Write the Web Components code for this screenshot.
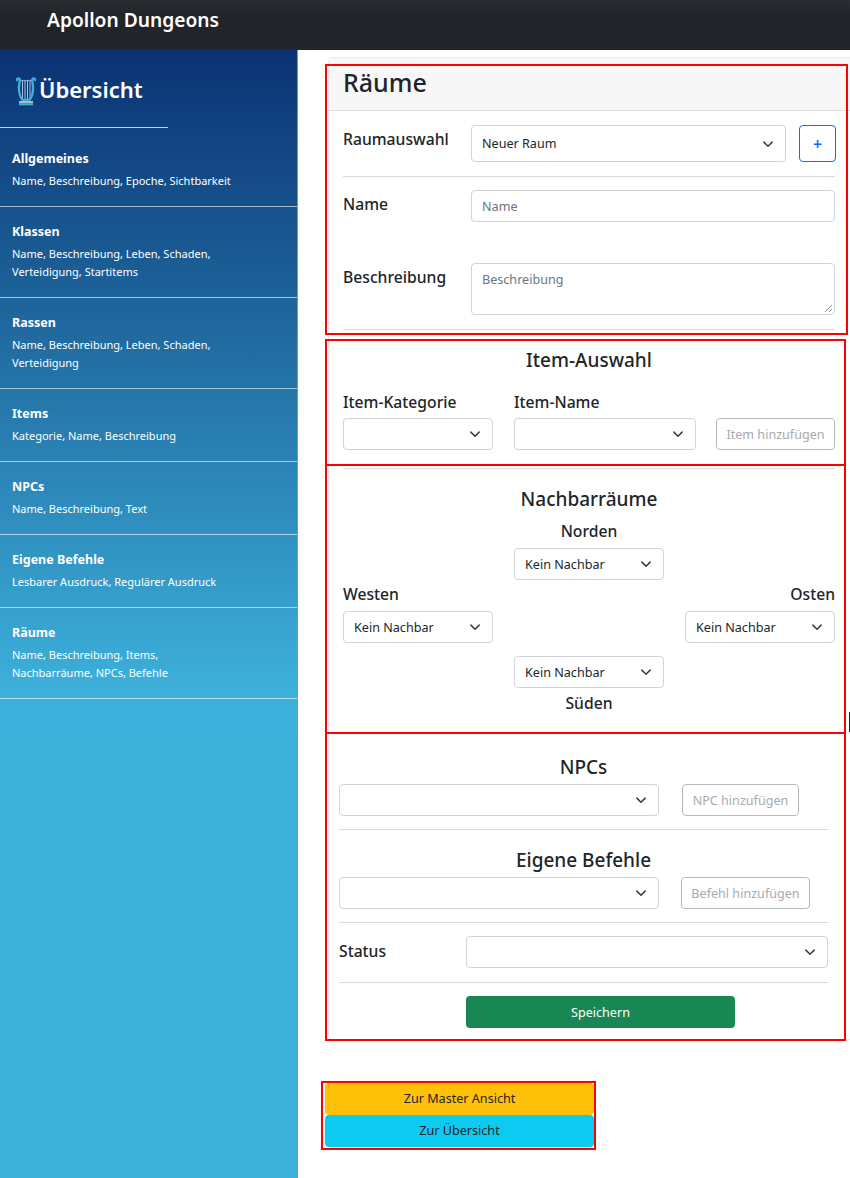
<!DOCTYPE html>
<html lang="de">
<head>
<meta charset="utf-8">
<title>Apollon Dungeons</title>
<style>
    html, body { margin: 0; height: 1178px; overflow: hidden; background: #fff; }
    body { font-family: "Noto Sans", "Open Sans", sans-serif; color: #212529; position: relative; }
    .layout { display: flex; height: 1128px; }
</style>
</head>
<body>
<ad-navbar>Apollon Dungeons</ad-navbar>
<div class="layout">
    <ad-sidebar>
        <ad-nav-item heading="Allgemeines">Name, Beschreibung, Epoche, Sichtbarkeit</ad-nav-item>
        <ad-nav-item heading="Klassen">Name, Beschreibung, Leben, Schaden,<br>Verteidigung, Startitems</ad-nav-item>
        <ad-nav-item heading="Rassen">Name, Beschreibung, Leben, Schaden,<br>Verteidigung</ad-nav-item>
        <ad-nav-item heading="Items">Kategorie, Name, Beschreibung</ad-nav-item>
        <ad-nav-item heading="NPCs">Name, Beschreibung, Text</ad-nav-item>
        <ad-nav-item heading="Eigene Befehle">Lesbarer Ausdruck, Regulärer Ausdruck</ad-nav-item>
        <ad-nav-item heading="Räume">Name, Beschreibung, Items,<br>Nachbarräume, NPCs, Befehle</ad-nav-item>
    </ad-sidebar>
    <ad-room-page></ad-room-page>
</div>

<!-- red annotation boxes drawn over the page -->
<ad-mark x="325" y="64" w="523" h="271"></ad-mark>
<ad-mark x="325" y="339" w="521" h="127"></ad-mark>
<ad-mark x="325" y="464" w="521" h="270"></ad-mark>
<ad-mark x="325" y="732" w="521" h="309"></ad-mark>
<ad-mark x="321" y="1081" w="275" h="69"></ad-mark>
<ad-mark tone="dark" x="849" y="712" w="1" h="20"></ad-mark>

<script>
    class AdNavbar extends HTMLElement {
        constructor() {
            super();
            this.attachShadow({ mode: "open" });
            this.shadowRoot.innerHTML = `
                <style>
                    :host {
                        display: flex;
                        height: 50px;
                        box-sizing: border-box;
                        padding: 6px 0 0 47px;
                        background: linear-gradient(#2a2e33, #212529 30%);
                        color: #fff;
                        font-size: 19.200px;
                        font-weight: 600;
                        line-height: 28px;
                    }
                </style>
                <slot></slot>
            `;
        }
    }

    class AdSidebar extends HTMLElement {
        constructor() {
            super();
            this.attachShadow({ mode: "open" });
            this.shadowRoot.innerHTML = `
                <style>
                    :host {
                        display: block;
                        flex: 0 0 298px;
                        background: #3db0da;
                        color: #fff;
                    }
                    .panel {
                        width: 297px;
                        height: 687px;
                        background: linear-gradient(#0a3272, #3db1db 94%);
                    }
                    .head {
                        display: flex;
                        align-items: center;
                        gap: 2px;
                        height: 77px;
                        box-sizing: border-box;
                        padding: 4px 0 0 15px;
                        font-size: 22px;
                        font-weight: 600;
                    }
                    .head span { margin-bottom: 4px; }
                    svg { width: 22px; height: 30px; flex: none; }
                    .rule {
                        width: 168px;
                        height: 1px;
                        margin-bottom: 6px;
                        background: rgba(255, 255, 255, .75);
                    }
                </style>
                <div class="panel">
                    <div class="head">
                        <svg viewBox="0 0 22 30" fill="none">
                            <path d="M4 4.500H18" stroke="#7fa6cf" stroke-width="1.200"/>
                            <path d="M7.500 5V23M10 5V23M12.500 5V23M15 5V23" stroke="#a9bfd8" stroke-width="1"/>
                            <path d="M2 4C2 1.800 4.800 1.800 4.800 4C4.800 7 3.500 9 4 14C4.500 19 6 23 8 24H14C16 23 17.500 19 18 14C18.500 9 17.200 7 17.200 4C17.200 1.800 20 1.800 20 4" stroke="#3eaedb" stroke-width="2.400" stroke-linecap="round"/>
                            <rect x="4" y="25" width="14" height="2.500" fill="#aeb9c4"/>
                            <rect x="4" y="27.500" width="14" height="1.800" fill="#3eaedb"/>
                        </svg>
                        <span>Übersicht</span>
                    </div>
                    <div class="rule"></div>
                    <slot></slot>
                </div>
            `;
        }
    }

    class AdNavItem extends HTMLElement {
        constructor() {
            super();
            this.attachShadow({ mode: "open" });
            this.shadowRoot.innerHTML = `
                <style>
                    :host {
                        display: block;
                        padding: 15px 8px 16px 12px;
                        border-bottom: 1px solid rgba(255, 255, 255, .6);
                    }
                    h4 {
                        margin: 0 0 3px;
                        font-size: 12.500px;
                        font-weight: 700;
                        line-height: 20px;
                    }
                    p {
                        margin: 0;
                        font-size: 11px;
                        line-height: 18px;
                    }
                </style>
                <h4></h4>
                <p><slot></slot></p>
            `;
            this.shadowRoot.querySelector("h4").textContent = this.getAttribute("heading");
        }
    }

    class AdSelect extends HTMLElement {
        constructor() {
            super();
            this.attachShadow({ mode: "open" });
            this.shadowRoot.innerHTML = `
                <style>
                    :host {
                        display: flex;
                        align-items: center;
                        height: 32px;
                        box-sizing: border-box;
                        padding: 0 11px 0 10px;
                        border: 1px solid #ced4da;
                        border-radius: 4px;
                        background: #fff;
                        color: #212529;
                        font-size: 12.600px;
                    }
                    span { flex: 1; white-space: nowrap; }
                    svg { width: 12px; height: 12px; flex: none; }
                </style>
                <span><slot></slot></span>
                <svg viewBox="0 0 16 16" fill="none">
                    <path d="M2.500 5.500L8 11L13.500 5.500" stroke="#343a40" stroke-width="2" stroke-linecap="round" stroke-linejoin="round"/>
                </svg>
            `;
        }
    }

    class AdField extends HTMLElement {
        constructor() {
            super();
            this.attachShadow({ mode: "open" });
            this.shadowRoot.innerHTML = `
                <style>
                    :host {
                        display: block;
                        position: relative;
                        box-sizing: border-box;
                        padding: 6px 10px;
                        border: 1px solid #ced4da;
                        border-radius: 4px;
                        background: #fff;
                        color: #6c757d;
                        font-size: 12.600px;
                        line-height: 20px;
                    }
                    svg { position: absolute; right: 1px; bottom: 1px; width: 9px; height: 9px; display: none; }
                    :host([multi]) svg { display: block; }
                </style>
                <slot></slot>
                <svg viewBox="0 0 9 9" fill="none" stroke="#8a8f94" stroke-width="1">
                    <path d="M1 8L8 1M5 8L8 5"/>
                </svg>
            `;
        }
    }

    class AdButton extends HTMLElement {
        constructor() {
            super();
            this.attachShadow({ mode: "open" });
            this.shadowRoot.innerHTML = `
                <style>
                    :host {
                        display: flex;
                        align-items: center;
                        justify-content: center;
                        height: 32px;
                        box-sizing: border-box;
                        border: 1px solid transparent;
                        border-radius: 4px;
                        font-size: 12.600px;
                        white-space: nowrap;
                    }
                    :host([kind="muted"]) { border-color: #b5b9bd; color: #a7abaf; }
                    :host([kind="plus"]) { border-color: #0d6efd; color: #0d6efd; font-size: 16px; font-weight: 600; }
                    :host([kind="save"]) { background: #198754; color: #fff; }
                    :host([kind="master"]) { background: #ffc107; color: #212529; padding-bottom: 2px; }
                    :host([kind="info"]) { background: #0dcaf0; color: #212529; padding-bottom: 2px; }
                </style>
                <slot></slot>
            `;
        }
    }

    class AdRoomPage extends HTMLElement {
        constructor() {
            super();
            this.attachShadow({ mode: "open" });
            this.shadowRoot.innerHTML = `
                <style>
                    :host {
                        display: block;
                        flex: 1;
                        min-width: 0;
                        font-size: 15.700px;
                    }
                    .card {
                        width: 540px;
                        height: 983px;
                        box-sizing: border-box;
                        margin: 7px 0 0 30px;
                        border: 1px solid #e9e9e9;
                        border-radius: 4px 0 0 4px;
                    }
                    .card-head {
                        height: 53px;
                        box-sizing: border-box;
                        padding: 6px 0 0 14px;
                        border-bottom: 1px solid #dfdfdf;
                        background: #f7f7f7;
                        font-size: 25px;
                        font-weight: 500;
                        line-height: 36px;
                    }
                    .block { width: 492px; margin-left: 14px; }
                    .block.low { width: 489px; margin-left: 10px; }
                    .row { display: flex; }
                    .row b { flex: 0 0 128px; font-weight: 500; line-height: 24px; }
                    hr { height: 1px; margin: 0; border: 0; background: #d9dadb; }
                    h3 {
                        margin: 0;
                        font-size: 19px;
                        font-weight: 500;
                        line-height: 24px;
                        text-align: center;
                    }
                    label { display: block; font-weight: 500; line-height: 24px; }
                    .items {
                        display: grid;
                        grid-template-columns: 150px 182px 119px;
                        gap: 4px 21px;
                        margin: 18px 0;
                    }
                    .items .add { grid-column: 3; grid-row: 2; margin-left: -1px; width: 119px; }
                    .compass {
                        display: grid;
                        grid-template-columns: repeat(3, 150px);
                        column-gap: 21px;
                        margin-top: 8px;
                    }
                    .compass label { text-align: center; }
                    .north { grid-column: 2; }
                    .north ad-select { margin-top: 5px; }
                    .west, .east { grid-row: 2; margin-top: 2px; }
                    .west label { text-align: left; }
                    .east { grid-column: 3; }
                    .east label { text-align: right; }
                    .west ad-select, .east ad-select { margin-top: 5px; }
                    .south { grid-column: 2; grid-row: 3; margin-top: 13px; }
                    .south label { margin-top: 3px; }
                    .add-row { display: flex; margin-top: 5px; }
                    .add-row ad-select { flex: 0 0 320px; margin-right: 23px; }
                    .bottom {
                        display: flex;
                        flex-direction: column;
                        width: 269px;
                        margin: 43px 0 0 27px;
                    }
                </style>
                <div class="card">
                    <div class="card-head">Räume</div>
                    <div class="block">
                        <div class="row" style="margin-top:14px">
                            <b style="margin-top:2px">Raumauswahl</b>
                            <ad-select style="flex:0 0 315px;height:37px">Neuer Raum</ad-select>
                            <ad-button kind="plus" style="flex:0 0 37px;height:37px;margin-left:13px">+</ad-button>
                        </div>
                        <hr style="margin-top:14px">
                        <div class="row" style="margin-top:13px">
                            <b style="margin-top:2px">Name</b>
                            <ad-field style="flex:1;height:32px">Name</ad-field>
                        </div>
                        <div class="row" style="margin-top:41px">
                            <b style="margin-top:2px">Beschreibung</b>
                            <ad-field multi style="flex:1;height:52px">Beschreibung</ad-field>
                        </div>
                        <hr style="margin-top:14px">
                        <h3 style="margin-top:18px">Item-Auswahl</h3>
                        <div class="items">
                            <label>Item-Kategorie</label>
                            <label>Item-Name</label>
                            <ad-select style="grid-row:2"></ad-select>
                            <ad-select style="grid-row:2"></ad-select>
                            <ad-button kind="muted" class="add">Item hinzufügen</ad-button>
                        </div>
                        <hr>
                        <h3 style="margin-top:18px">Nachbarräume</h3>
                        <div class="compass">
                            <div class="north"><label>Norden</label><ad-select>Kein Nachbar</ad-select></div>
                            <div class="west"><label>Westen</label><ad-select>Kein Nachbar</ad-select></div>
                            <div class="east"><label>Osten</label><ad-select>Kein Nachbar</ad-select></div>
                            <div class="south"><ad-select>Kein Nachbar</ad-select><label>Süden</label></div>
                        </div>
                    </div>
                    <div class="block low">
                        <hr style="margin-top:18px">
                        <h3 style="margin-top:21px">NPCs</h3>
                        <div class="add-row">
                            <ad-select></ad-select>
                            <ad-button kind="muted" style="flex:0 0 117px">NPC hinzufügen</ad-button>
                        </div>
                        <hr style="margin-top:13px">
                        <h3 style="margin-top:18px">Eigene Befehle</h3>
                        <div class="add-row">
                            <ad-select></ad-select>
                            <ad-button kind="muted" style="flex:0 0 129px;margin-left:-1px">Befehl hinzufügen</ad-button>
                        </div>
                        <hr style="margin-top:13px">
                        <div class="row" style="margin-top:13px">
                            <b style="flex-basis:127px;margin-top:3px">Status</b>
                            <ad-select style="flex:1"></ad-select>
                        </div>
                        <hr style="margin-top:14px">
                        <ad-button kind="save" style="width:269px;margin:13px 0 0 127px">Speichern</ad-button>
                    </div>
                </div>
                <div class="bottom">
                    <ad-button kind="master">Zur Master Ansicht</ad-button>
                    <ad-button kind="info">Zur Übersicht</ad-button>
                </div>
            `;
        }
    }

    class AdMark extends HTMLElement {
        constructor() {
            super();
            this.attachShadow({ mode: "open" });
            this.shadowRoot.innerHTML = `
                <style>
                    :host {
                        position: absolute;
                        box-sizing: border-box;
                        border: 2px solid #f00;
                        pointer-events: none;
                    }
                    :host([tone="dark"]) { border: 0; background: #222; }
                </style>
            `;
            this.style.left = this.getAttribute("x") + "px";
            this.style.top = this.getAttribute("y") + "px";
            this.style.width = this.getAttribute("w") + "px";
            this.style.height = this.getAttribute("h") + "px";
        }
    }

    customElements.define("ad-navbar", AdNavbar);
    customElements.define("ad-sidebar", AdSidebar);
    customElements.define("ad-nav-item", AdNavItem);
    customElements.define("ad-select", AdSelect);
    customElements.define("ad-field", AdField);
    customElements.define("ad-button", AdButton);
    customElements.define("ad-room-page", AdRoomPage);
    customElements.define("ad-mark", AdMark);
</script>
</body>
</html>
